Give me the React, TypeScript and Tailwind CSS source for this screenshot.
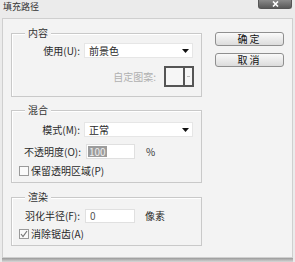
const font = "font-['Noto_Sans_CJK_SC','Noto_Sans',sans-serif]";

function Arrow() {
  return (
    <svg width="7" height="4" viewBox="0 0 7 4" className="mr-[3px]">
      <path d="M0 0 H7 L3.5 4 Z" fill="#111" />
    </svg>
  );
}

function Select({ value }: { value: string }) {
  return (
    <div className="ml-[4px] flex h-[15px] w-[109px] items-center justify-between border border-[#e6e6e6] bg-white pl-[4px]">
      <span className="text-[10px] leading-none text-[#2a2a2a]">{value}</span>
      <Arrow />
    </div>
  );
}

function Group({
  title,
  className,
  children,
}: {
  title: string;
  className: string;
  children: React.ReactNode;
}) {
  return (
    <div className={`relative border border-[#c9c9c9] shadow-[inset_1px_1px_0_#fff] ${className}`}>
      <span className="absolute left-[13px] top-[-7px] bg-[#f3f3f3] px-[3px] text-[10px] leading-[12px] text-[#333]">
        {title}
      </span>
      {children}
    </div>
  );
}

function Check({ checked, label }: { checked?: boolean; label: string }) {
  return (
    <div className="flex h-[10px] items-center pl-[7px]">
      <div className="flex h-[10px] w-[10px] items-center justify-center border border-[#9a9a9a] bg-[#fafafa]">
        {checked && (
          <svg width="8" height="8" viewBox="0 0 8 8">
            <path d="M1 4 L3 6.5 L7 1" stroke="#777" strokeWidth="1.2" fill="none" />
          </svg>
        )}
      </div>
      <span className="ml-[2px] text-[10px] leading-none text-[#2a2a2a]">{label}</span>
    </div>
  );
}

export default function App() {
  return (
    <div className={`flex h-[262px] w-[295px] flex-col overflow-hidden bg-[#ebebeb] ${font}`}>
      {/* Title bar */}
      <div className="relative h-[18px] shrink-0">
        <span className="absolute left-[3px] top-[1px] text-[9px] leading-[11px] text-[#333]">填充路径</span>
        <div className="absolute right-[3px] top-0 flex h-[9px] w-[34px] items-center justify-center rounded-b-[3px] border border-t-0 border-[#555] bg-gradient-to-b from-[#8a8a8a] to-[#5a5a5a]">
          <svg width="7" height="6" viewBox="0 0 7 6">
            <path d="M1 0.5 L6 5.5 M6 0.5 L1 5.5" stroke="#fff" strokeWidth="1.6" />
          </svg>
        </div>
      </div>

      {/* Body */}
      <div className="mx-[2px] flex h-[240px] shrink-0 border border-[#cfcfcf] bg-[#f3f3f3]">
        <div className="flex w-[199px] flex-col pl-[8px] pt-[14px]">
          <Group title="内容" className="h-[64px] w-[191px] pt-[9px]">
            <div className="flex items-center">
              <span className="w-[68px] text-right text-[10px] leading-none text-[#2a2a2a]">使用(U):</span>
              <Select value="前景色" />
            </div>
            <div className="mt-[8px] flex items-center justify-end pr-[7px]">
              <span className="text-[10px] leading-none text-[#b0b0b0]">自定图案:</span>
              <div className="ml-[8px] flex h-[21px] w-[30px] border-2 border-[#555] bg-[#f6f6f6]">
                <div className="flex-1 border-r-2 border-[#555]" />
                <div className="flex w-[7px] items-center justify-center">
                  <div className="h-[1px] w-[3px] bg-[#bbb]" />
                </div>
              </div>
            </div>
          </Group>

          <Group title="混合" className="mt-[13px] h-[73px] w-[191px] pt-[11px]">
            <div className="flex items-center">
              <span className="w-[68px] text-right text-[10px] leading-none text-[#2a2a2a]">模式(M):</span>
              <Select value="正常" />
            </div>
            <div className="mt-[7px] flex items-center">
              <span className="w-[69px] text-right text-[10px] leading-none text-[#2a2a2a]">不透明度(O):</span>
              <div className="ml-[5px] flex h-[15px] w-[49px] items-center border border-[#e0e0e0] bg-white pl-[1px]">
                <span className="bg-[#9c9c9c] px-[1px] text-[10px] leading-[11px] text-[#eee]">100</span>
              </div>
              <span className="ml-[11px] text-[10px] leading-none text-[#333]">%</span>
            </div>
            <div className="mt-[7px]">
              <Check label="保留透明区域(P)" />
            </div>
          </Group>

          <Group title="渲染" className="mt-[14px] h-[49px] w-[191px] pt-[11px]">
            <div className="flex items-center">
              <span className="w-[68px] text-right text-[10px] leading-none text-[#2a2a2a]">羽化半径(F):</span>
              <div className="ml-[5px] flex h-[14px] w-[50px] items-center border border-[#e0e0e0] bg-white pl-[4px]">
                <span className="text-[10px] leading-none text-[#555]">0</span>
              </div>
              <span className="ml-[10px] text-[10px] leading-none text-[#2a2a2a]">像素</span>
            </div>
            <div className="mt-[6px]">
              <Check checked label="消除锯齿(A)" />
            </div>
          </Group>
        </div>

        {/* Buttons */}
        <div className="ml-[13px] flex flex-col gap-[7px] pt-[13px]">
          <button className="h-[14px] w-[69px] rounded-[3px] border border-[#8f8f8f] bg-gradient-to-b from-[#fafafa] to-[#dcdcdc] text-[10px] leading-none tracking-[2px] text-[#111]">
            确定
          </button>
          <button className="h-[14px] w-[69px] rounded-[3px] border border-[#8f8f8f] bg-gradient-to-b from-[#fafafa] to-[#dcdcdc] text-[10px] leading-none tracking-[2px] text-[#111]">
            取消
          </button>
        </div>
      </div>

      {/* Bottom edge */}
      <div className="mx-[2px] h-[4px] bg-gradient-to-b from-[#9a9a9a] to-[#d8d8d8]" />
    </div>
  );
}
